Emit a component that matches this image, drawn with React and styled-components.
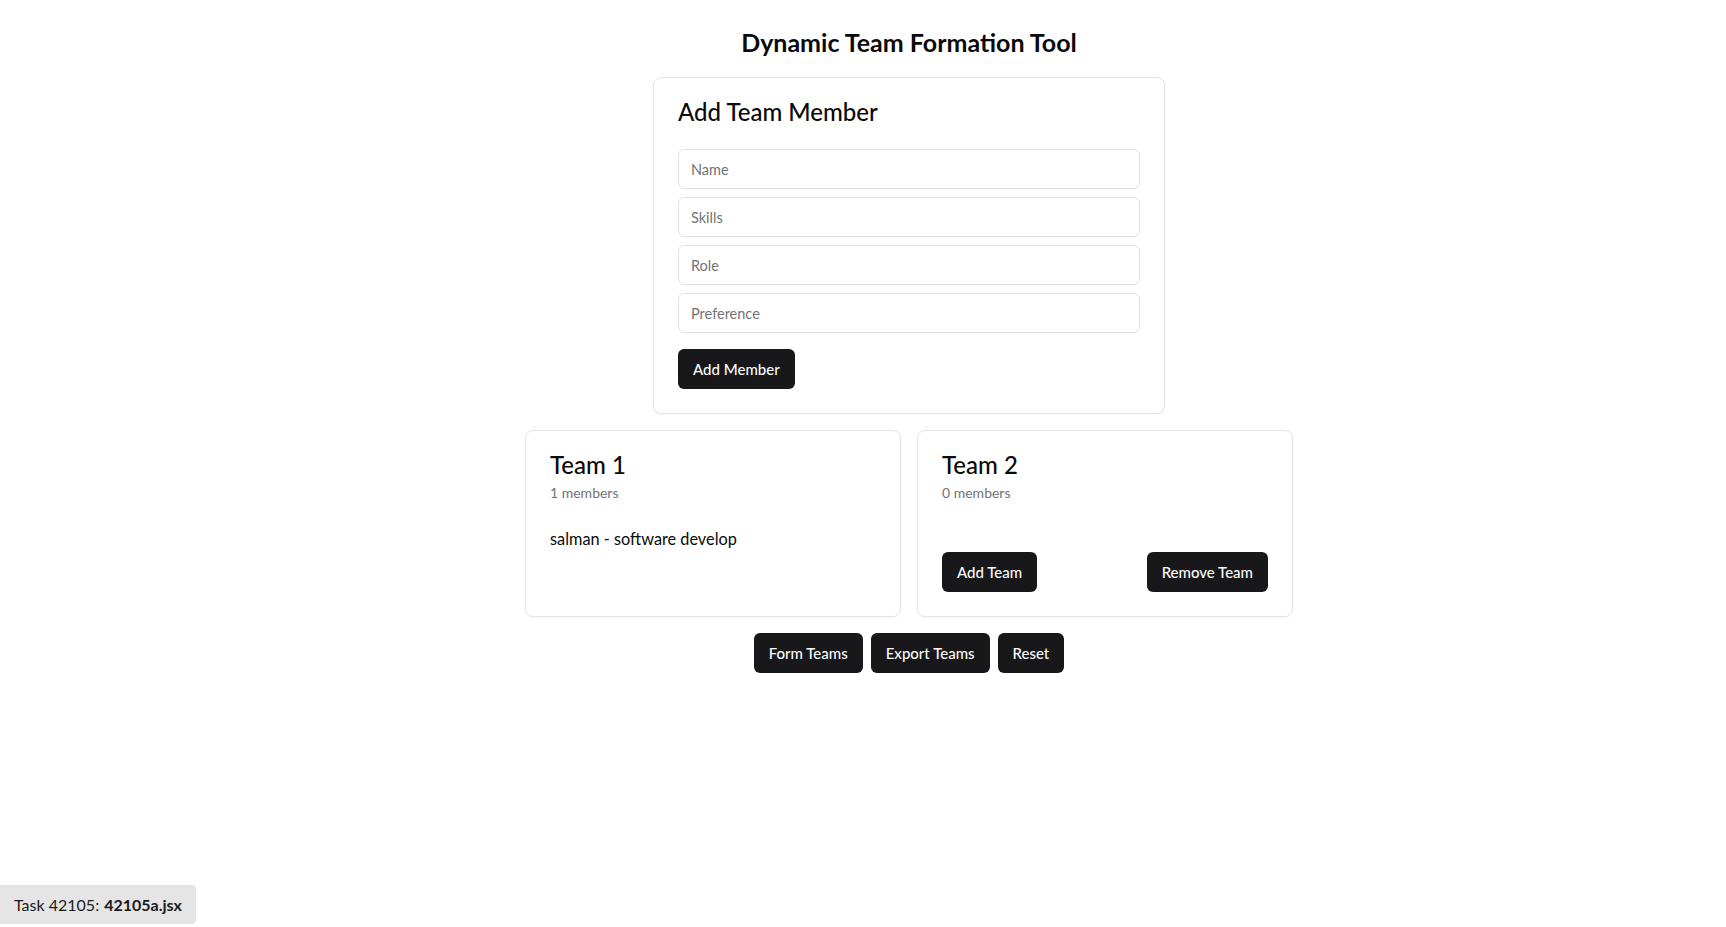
import React, { useState } from 'react';
import styled, { createGlobalStyle } from 'styled-components';

const GlobalStyle = createGlobalStyle`
    * {
        box-sizing : border-box;
    }
    body {
        margin : 0;
        background : #ffffff;
        font-family : Lato, 'Noto Sans', sans-serif;
        color : #0a0a0a;
    }
`;

const fields = ['Name', 'Skills', 'Role', 'Preference'];

const App = () => {
    const [teams] = useState([
        { name : 'Team 1', members : [{ name : 'salman', role : 'software develop' }] },
        { name : 'Team 2', members : [] },
    ]);

    return (
        <Page>
            <GlobalStyle />
            <Title>Dynamic Team Formation Tool</Title>
            <FormCard>
                <CardHeading>Add Team Member</CardHeading>
                <Fields>
                    {fields.map((f) => (
                        <Input key={f} placeholder={f} />
                    ))}
                </Fields>
                <AddButton>Add Member</AddButton>
            </FormCard>

            <TeamGrid>
                {teams.map((team, i) => (
                    <TeamCard key={team.name}>
                        <CardHeading>{team.name}</CardHeading>
                        <MemberCount>{team.members.length} members</MemberCount>
                        {team.members.length > 0 && (
                            <MemberList>
                                {team.members.map((m) => (
                                    <li key={m.name}>{m.name} - {m.role}</li>
                                ))}
                            </MemberList>
                        )}
                        {i === teams.length - 1 && (
                            <TeamActions>
                                <Button>Add Team</Button>
                                <Button>Remove Team</Button>
                            </TeamActions>
                        )}
                    </TeamCard>
                ))}
            </TeamGrid>

            <Toolbar>
                <Button>Form Teams</Button>
                <Button>Export Teams</Button>
                <Button>Reset</Button>
            </Toolbar>

            <TaskBadge>
                Task 42105: <b>42105a.jsx</b>
            </TaskBadge>
        </Page>
    );
};

export default App;

const Page = styled.div`
    display : flex;
    flex-direction : column;
    align-items : center;
    padding : 26px 0 0 92px;
    min-height : 100vh;
`;

const Title = styled.h1`
    margin : 0 0 19px;
    font-size : 25px;
    line-height : 32px;
    font-weight : 700;
    color : #0a0a0a;
`;

const Card = styled.div`
    background : #ffffff;
    border : 1px solid #e5e5e5;
    border-radius : 8px;
    padding : 24px;
    box-shadow : 0 1px 2px rgba(0, 0, 0, 0.04);
`;

const FormCard = styled(Card)`
    width : 512px;
`;

const CardHeading = styled.h2`
    margin : 0;
    font-size : 24px;
    line-height : 20px;
    font-weight : 500;
    color : #0a0a0a;
`;

const Fields = styled.div`
    display : flex;
    flex-direction : column;
    gap : 8px;
    margin-top : 27px;
`;

const Input = styled.input`
    height : 40px;
    width : 100%;
    padding : 0 12px;
    border : 1px solid #e2e2e2;
    border-radius : 6px;
    font-family : inherit;
    font-size : 14.5px;
    color : #0a0a0a;
    outline : none;

    &::placeholder {
        color : #737373;
    }
`;

const Button = styled.button`
    height : 40px;
    padding : 0 15px;
    border : none;
    border-radius : 6px;
    background : #18181b;
    color : #fafafa;
    font-family : inherit;
    font-size : 15px;
    font-weight : 500;
    cursor : pointer;
`;

const AddButton = styled(Button)`
    margin-top : 16px;
`;

const TeamGrid = styled.div`
    display : grid;
    grid-template-columns : 1fr 1fr;
    gap : 16px;
    width : 768px;
    margin-top : 16px;
`;

const TeamCard = styled(Card)`
    display : flex;
    flex-direction : column;
`;

const MemberCount = styled.p`
    margin : 8px 0 0;
    font-size : 14px;
    line-height : 20px;
    color : #737373;
`;

const MemberList = styled.ul`
    list-style : none;
    margin : 24px 0 0;
    padding : 0;
    font-size : 16.3px;
    line-height : 24px;
`;

const TeamActions = styled.div`
    display : flex;
    justify-content : space-between;
    margin-top : 49px;
`;

const Toolbar = styled.div`
    display : flex;
    gap : 8px;
    margin-top : 16px;
`;

const TaskBadge = styled.div`
    position : fixed;
    left : 0;
    bottom : 3px;
    height : 39px;
    display : flex;
    align-items : center;
    padding : 0 14px;
    background : #e5e5e5;
    border-radius : 0 4px 4px 0;
    font-size : 16px;
    color : #1a1a1a;

    b {
        margin-left : 5px;
        font-weight : 700;
    }
`;
